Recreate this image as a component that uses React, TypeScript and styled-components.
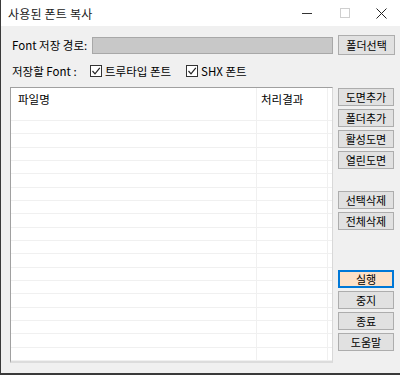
import React from "react";
import styled, { createGlobalStyle } from "styled-components";

const GlobalStyle = createGlobalStyle`
  html, body {
    margin: 0;
    padding: 0;
    background: #2b2b2b;
  }
  * {
    box-sizing: border-box;
  }
`;

const leftButtons = ["도면추가", "폴더추가", "활성도면", "열린도면"];
const deleteButtons = ["선택삭제", "전체삭제"];
const runButtons = ["실행", "중지", "종료", "도움말"];

const Check: React.FC<{ label: string }> = ({ label }) => (
  <CheckLabel>
    <Box>
      <svg width="10" height="10" viewBox="0 0 10 10">
        <path d="M1.5 5 L4 7.8 L8.8 1.8" fill="none" stroke="#222" strokeWidth="1.2" />
      </svg>
    </Box>
    {label}
  </CheckLabel>
);

const App: React.FC = () => {
  const rows = Array.from({ length: 18 });

  return (
    <Window>
      <GlobalStyle />
      <TitleBar>
        <Title>사용된 폰트 복사</Title>
        <Controls>
          <Ctrl>
            <svg width="10" height="10" viewBox="0 0 10 10">
              <path d="M0 5.5 H10" stroke="#333" strokeWidth="1" />
            </svg>
          </Ctrl>
          <Ctrl>
            <svg width="10" height="10" viewBox="0 0 10 10">
              <rect x="0.5" y="0.5" width="9" height="9" fill="none" stroke="#cfcfcf" />
            </svg>
          </Ctrl>
          <Ctrl>
            <svg width="11" height="11" viewBox="0 0 11 11">
              <path d="M0.5 0.5 L10.5 10.5 M10.5 0.5 L0.5 10.5" stroke="#222" strokeWidth="1" />
            </svg>
          </Ctrl>
        </Controls>
      </TitleBar>

      <Body>
        <PathRow>
          <Label>Font 저장 경로:</Label>
          <PathInput />
          <Button>폴더선택</Button>
        </PathRow>

        <OptionRow>
          <Label>저장할 Font :</Label>
          <Check label="트루타입 폰트" />
          <Check label="SHX 폰트" />
        </OptionRow>

        <Main>
          <List>
            <Header>
              <NameCell>파일명</NameCell>
              <ResultCell>처리결과</ResultCell>
              <Filler />
            </Header>
            {rows.map((_, i) => (
              <Row key={i}>
                <NameCell />
                <ResultCell />
                <Filler />
              </Row>
            ))}
          </List>

          <Side>
            <Group>
              {leftButtons.map((b) => (
                <Button key={b}>{b}</Button>
              ))}
            </Group>
            <Group $top={22}>
              {deleteButtons.map((b) => (
                <Button key={b}>{b}</Button>
              ))}
            </Group>
            <Group $top={40}>
              {runButtons.map((b, i) => (
                <Button key={b} $primary={i === 0}>
                  {b}
                </Button>
              ))}
            </Group>
          </Side>
        </Main>
      </Body>
    </Window>
  );
};

export default App;

const Window = styled.div`
  width: 400px;
  height: 375px;
  display: flex;
  flex-direction: column;
  border-left: 1px solid #3a3a3a;
  border-bottom: 2px solid #3a3a3a;
  background: #f0f0f0;
  font-family: "Noto Sans CJK KR", "Liberation Sans", sans-serif;
  color: #000;
  overflow: hidden;
`;

const TitleBar = styled.div`
  height: 26px;
  flex: none;
  background: #fff;
  display: flex;
  align-items: center;
  justify-content: space-between;
  padding-left: 7px;
`;

const Title = styled.div`
  font-size: 12px;
  color: #1a1a1a;
  letter-spacing: 0.2px;
`;

const Controls = styled.div`
  display: flex;
  align-items: center;
  height: 100%;
`;

const Ctrl = styled.div`
  width: 37px;
  height: 100%;
  display: flex;
  align-items: center;
  justify-content: center;
  margin-left: 0;
  &:first-child {
    margin-right: 1px;
  }
`;

const Body = styled.div`
  flex: 1;
  display: flex;
  flex-direction: column;
  padding: 9px 5px 0 9px;
`;

const Label = styled.span`
  font-size: 11.5px;
  white-space: nowrap;
  padding-left: 2px;
`;

const PathRow = styled.div`
  display: flex;
  align-items: center;
  height: 20px;
`;

const PathInput = styled.div`
  width: 242px;
  height: 17px;
  margin-left: 5px;
  background: #c8c8c8;
  border: 1px solid #a8a8a8;
`;

const OptionRow = styled.div`
  display: flex;
  align-items: center;
  height: 20px;
  margin-top: 6px;
  ${Label} {
    width: 80px;
  }
`;

const CheckLabel = styled.label`
  display: flex;
  align-items: center;
  gap: 3px;
  font-size: 11.5px;
  margin-right: 15px;
`;

const Box = styled.span`
  width: 12px;
  height: 12px;
  border: 1px solid #333;
  background: #fff;
  display: flex;
  align-items: center;
  justify-content: center;
`;

const Main = styled.div`
  display: flex;
  margin-top: 6px;
`;

const List = styled.div`
  width: 323px;
  height: 276px;
  background: #fff;
  border: 1px solid #a0a0a0;
  border-right-color: #d8d8d8;
  border-bottom: 2px solid #dcdcdc;
  overflow: hidden;
  display: flex;
  flex-direction: column;
`;

const Header = styled.div`
  display: flex;
  height: 33px;
  flex: none;
  font-size: 11.5px;
  border-bottom: 1px solid #f0f0f0;
`;

const Row = styled.div`
  display: flex;
  height: 13.33px;
  flex: none;
  border-bottom: 1px solid #f0f0f0;
`;

const NameCell = styled.div`
  width: 246px;
  padding: 3px 0 0 7px;
  border-right: 1px solid #f0f0f0;
`;

const ResultCell = styled.div`
  width: 71px;
  padding: 3px 0 0 4px;
  border-right: 1px solid #f0f0f0;
`;

const Filler = styled.div`
  flex: 1;
`;

const Side = styled.div`
  display: flex;
  flex-direction: column;
  margin-left: 5px;
  padding-top: 1px;
`;

const Group = styled.div<{ $top?: number }>`
  display: flex;
  flex-direction: column;
  gap: 3px;
  margin-top: ${(p) => p.$top ?? 0}px;
`;

const Button = styled.button<{ $primary?: boolean }>`
  width: 56px;
  height: 18px;
  padding: 0;
  margin-left: 0;
  font-family: "Noto Sans CJK KR", "Liberation Sans", sans-serif;
  font-size: 11px;
  color: #000;
  background: ${(p) => (p.$primary ? "#fde1c8" : "#e1e1e1")};
  border: ${(p) => (p.$primary ? "1px solid #0078d7" : "1px solid #adadad")};
  box-shadow: ${(p) => (p.$primary ? "inset 0 0 0 1px #0078d7" : "none")};
  display: flex;
  align-items: center;
  justify-content: center;
  ${PathRow} & {
    width: 57px;
    height: 20px;
    margin-left: 5px;
  }
`;
